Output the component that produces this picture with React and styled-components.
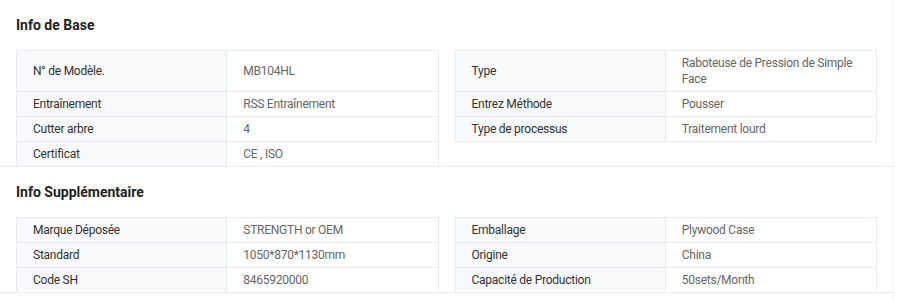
import React from 'react';
import styled, { createGlobalStyle } from 'styled-components';

const GlobalStyle = createGlobalStyle`
  body {
    margin: 0;
    background: #fff;
    font-family: Roboto, "Liberation Sans", Arial, sans-serif;
  }
`;

const Wrapper = styled.div`
  width: 894px;
  box-sizing: border-box;
  border-right: 1px solid #eef0f4;
  min-height: 300px;
`;

const Section = styled.div`
  padding: 0 16px;
  border-bottom: 1px solid #e8ebf0;
`;

const Title = styled.h3`
  margin: 0;
  padding: 15px 0 15px;
  font-family: Roboto, "Open Sans", Arial, sans-serif;
  font-size: 14px;
  font-weight: 700;
  line-height: 20px;
  color: #222;
`;

const Grid = styled.div`
  display: grid;
  grid-template-columns: 1fr 1fr;
  column-gap: 16px;
  margin-bottom: -1px;
`;

const Pair = styled.div`
  display: grid;
  grid-template-columns: 1fr 1fr;
  border: 1px solid #e8ebf0;
  border-top: ${(p) => (p.first ? '1px solid #e8ebf0' : 'none')};
`;

const Label = styled.div`
  padding: 4px 16px 4px 16px;
  background: #f8f9fb;
  border-right: 1px solid #e8ebf0;
  font-size: 12px;
  letter-spacing: -0.25px;
  line-height: 16px;
  color: #333;
  display: flex;
  align-items: center;
`;

const Value = styled.div`
  padding: 4px 12px 4px 16px;
  font-size: 12px;
  letter-spacing: -0.25px;
  line-height: 16px;
  color: #666;
  display: flex;
  align-items: center;
`;

const Empty = styled.div``;

const sections = [
  {
    title: 'Info de Base',
    rows: [
      [['N° de Modèle.', 'MB104HL'], ['Type', 'Raboteuse de Pression de Simple Face']],
      [['Entraînement', 'RSS Entraînement'], ['Entrez Méthode', 'Pousser']],
      [['Cutter arbre', '4'], ['Type de processus', 'Traitement lourd']],
      [['Certificat', 'CE , ISO'], null],
    ],
  },
  {
    title: 'Info Supplémentaire',
    rows: [
      [['Marque Déposée', 'STRENGTH or OEM'], ['Emballage', 'Plywood Case']],
      [['Standard', '1050*870*1130mm'], ['Origine', 'China']],
      [['Code SH', '8465920000'], ['Capacité de Production', '50sets/Month']],
    ],
  },
];

export default function App() {
  return (
    <>
      <GlobalStyle />
      <Wrapper>
        {sections.map((s) => (
          <Section key={s.title}>
            <Title>{s.title}</Title>
            <Grid>
              {s.rows.map((row, i) =>
                row.map((cell, j) =>
                  cell ? (
                    <Pair key={`${i}-${j}`} first={i === 0}>
                      <Label>{cell[0]}</Label>
                      <Value>{cell[1]}</Value>
                    </Pair>
                  ) : (
                    <Empty key={`${i}-${j}`} />
                  )
                )
              )}
            </Grid>
          </Section>
        ))}
      </Wrapper>
    </>
  );
}
